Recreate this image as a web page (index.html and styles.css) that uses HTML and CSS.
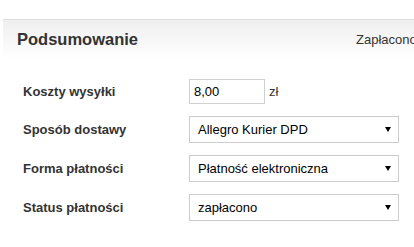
FILE: index.html
```html
<!DOCTYPE html>
<html lang="pl">
<head>
<meta charset="utf-8">
<link rel="stylesheet" href="styles.css">
</head>
<body>
<section class="panel">
  <header class="panel-head">
    <h2 class="panel-title">Podsumowanie</h2>
    <span class="panel-status">Zapłacono</span>
  </header>
  <div class="form">
    <label class="label">Koszty wysyłki</label>
    <div class="field">
      <input class="input" type="text" value="8,00"><span class="unit">zł</span>
    </div>

    <label class="label">Sposób dostawy</label>
    <div class="field">
      <div class="select">
        <span class="select-text">Allegro Kurier DPD</span>
        <svg class="arrow" width="6" height="5" viewBox="0 0 6 5"><path d="M0 0H6L3 5Z" fill="#000"/></svg>
      </div>
    </div>

    <label class="label">Forma płatności</label>
    <div class="field">
      <div class="select">
        <span class="select-text">Płatność elektroniczna</span>
        <svg class="arrow" width="6" height="5" viewBox="0 0 6 5"><path d="M0 0H6L3 5Z" fill="#000"/></svg>
      </div>
    </div>

    <label class="label">Status płatności</label>
    <div class="field">
      <div class="select">
        <span class="select-text">zapłacono</span>
        <svg class="arrow" width="6" height="5" viewBox="0 0 6 5"><path d="M0 0H6L3 5Z" fill="#000"/></svg>
      </div>
    </div>
  </div>
</section>
</body>
</html>
```
FILE: styles.css
```css
html, body {
  margin: 0;
  padding: 0;
  background: #fff;
  overflow: hidden;
}
body {
  font-family: "Liberation Sans", Arial, sans-serif;
  color: #333;
}
.panel {
  margin: 19px 0 0 3px;
  width: 440px;
}
.panel-head {
  height: 39px;
  border-top: 1px solid #dedede;
  background: linear-gradient(to bottom, #efefef 0%, #f7f7f7 50%, #fff 100%);
  display: flex;
  align-items: center;
  padding: 0 0 0 14px;
}
.panel-title {
  margin: 0;
  font-size: 16.5px;
  font-weight: bold;
  color: #333;
}
.panel-status {
  margin-left: auto;
  margin-right: 25px;
  font-size: 13px;
  color: #333;
  width: 62px;
}
.form {
  display: grid;
  grid-template-columns: 166px 210px;
  row-gap: 12px;
  padding: 20px 0 0 20px;
  align-items: center;
}
.label {
  font-size: 13px;
  font-weight: bold;
  color: #333;
}
.field {
  display: flex;
  align-items: center;
}
.input {
  box-sizing: border-box;
  width: 76px;
  height: 25px;
  border: 1px solid #d0d0d0;
  padding: 0 4px;
  font-family: "Liberation Sans", Arial, sans-serif;
  font-size: 13px;
  color: #000;
  margin: 0;
  outline: none;
}
.unit {
  margin-left: 4px;
  font-size: 13px;
  color: #333;
}
.select {
  box-sizing: border-box;
  position: relative;
  width: 210px;
  height: 27px;
  border: 1px solid #ccc;
  display: flex;
  align-items: center;
  padding: 0 8px;
  font-size: 13px;
  color: #000;
}
.arrow {
  position: absolute;
  right: 7px;
  top: 10px;
}
```
